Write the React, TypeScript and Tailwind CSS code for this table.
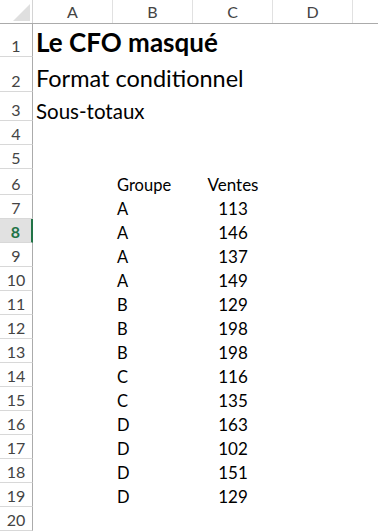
import React from "react";

type Row = {
  h: number;
  a?: React.ReactNode;
  aCls?: string;
  b?: string;
  c?: string;
  active?: boolean;
};

const data: [string, number][] = [
  ["A", 113],
  ["A", 146],
  ["A", 137],
  ["A", 149],
  ["B", 129],
  ["B", 198],
  ["B", 198],
  ["C", 116],
  ["C", 135],
  ["D", 163],
  ["D", 102],
  ["D", 151],
  ["D", 129],
];

const rows: Row[] = [
  { h: 33, a: "Le CFO masqué", aCls: "font-bold text-[26px] leading-[30px] bottom-0" },
  { h: 35, a: "Format conditionnel", aCls: "text-[23.5px] leading-[28px] bottom-0" },
  { h: 29, a: "Sous-totaux", aCls: "text-[20.5px] leading-[24px] bottom-[-2px]" },
  { h: 24 },
  { h: 24 },
  { h: 26, b: "Groupe", c: "Ventes" },
  ...data.map(([g, v], i) => ({ h: 24, b: g, c: String(v), active: i === 1 })),
  { h: 24 },
];

const cols = ["A", "B", "C", "D", ""];

export default function App() {
  return (
    <div
      className="w-[378px] h-[531px] overflow-hidden bg-white text-black"
      style={{ fontFamily: "Lato, 'Open Sans', sans-serif" }}
    >
      {/* column headers */}
      <div className="flex h-[24px] border-b border-[#ababab]">
        <div className="w-[33px] shrink-0 relative border-r border-[#d4d4d4]">
          <svg className="absolute right-[2px] bottom-[2px]" width="17" height="17" viewBox="0 0 17 17">
            <polygon points="17,0 17,17 0,17" fill="#dfdfdf" />
          </svg>
        </div>
        {cols.map((c, i) => (
          <div
            key={i}
            className={`${c ? "w-[80px] border-r border-[#e1e1e1]" : "flex-1"} shrink-0 flex items-end justify-center pb-[1px] text-[16px] leading-[20px] text-[#444]`}
          >
            {c}
          </div>
        ))}
      </div>

      {rows.map((r, i) => (
        <div key={i} className="flex" style={{ height: r.h }}>
          <div
            className={`w-[33px] shrink-0 flex items-end justify-center text-[16px] leading-[20px] border-b border-[#d8d8d8] ${
              r.active
                ? "bg-[#e1e1e1] text-[#217346] font-bold border-r-2 border-r-[#217346]"
                : "text-[#444] border-r border-r-[#ababab]"
            }`}
          >
            {i + 1}
          </div>
          <div className="w-[80px] shrink-0 relative">
            {r.a && (
              <span className={`absolute left-[3px] whitespace-nowrap ${r.aCls}`}>{r.a}</span>
            )}
          </div>
          <div className="w-[80px] shrink-0 flex items-end pl-[4px] text-[16.5px] leading-[20px]">
            {r.b}
          </div>
          <div className="w-[80px] shrink-0 flex items-end justify-center text-[17px] leading-[20px]">
            {r.c}
          </div>
          <div className="flex-1" />
        </div>
      ))}
    </div>
  );
}
